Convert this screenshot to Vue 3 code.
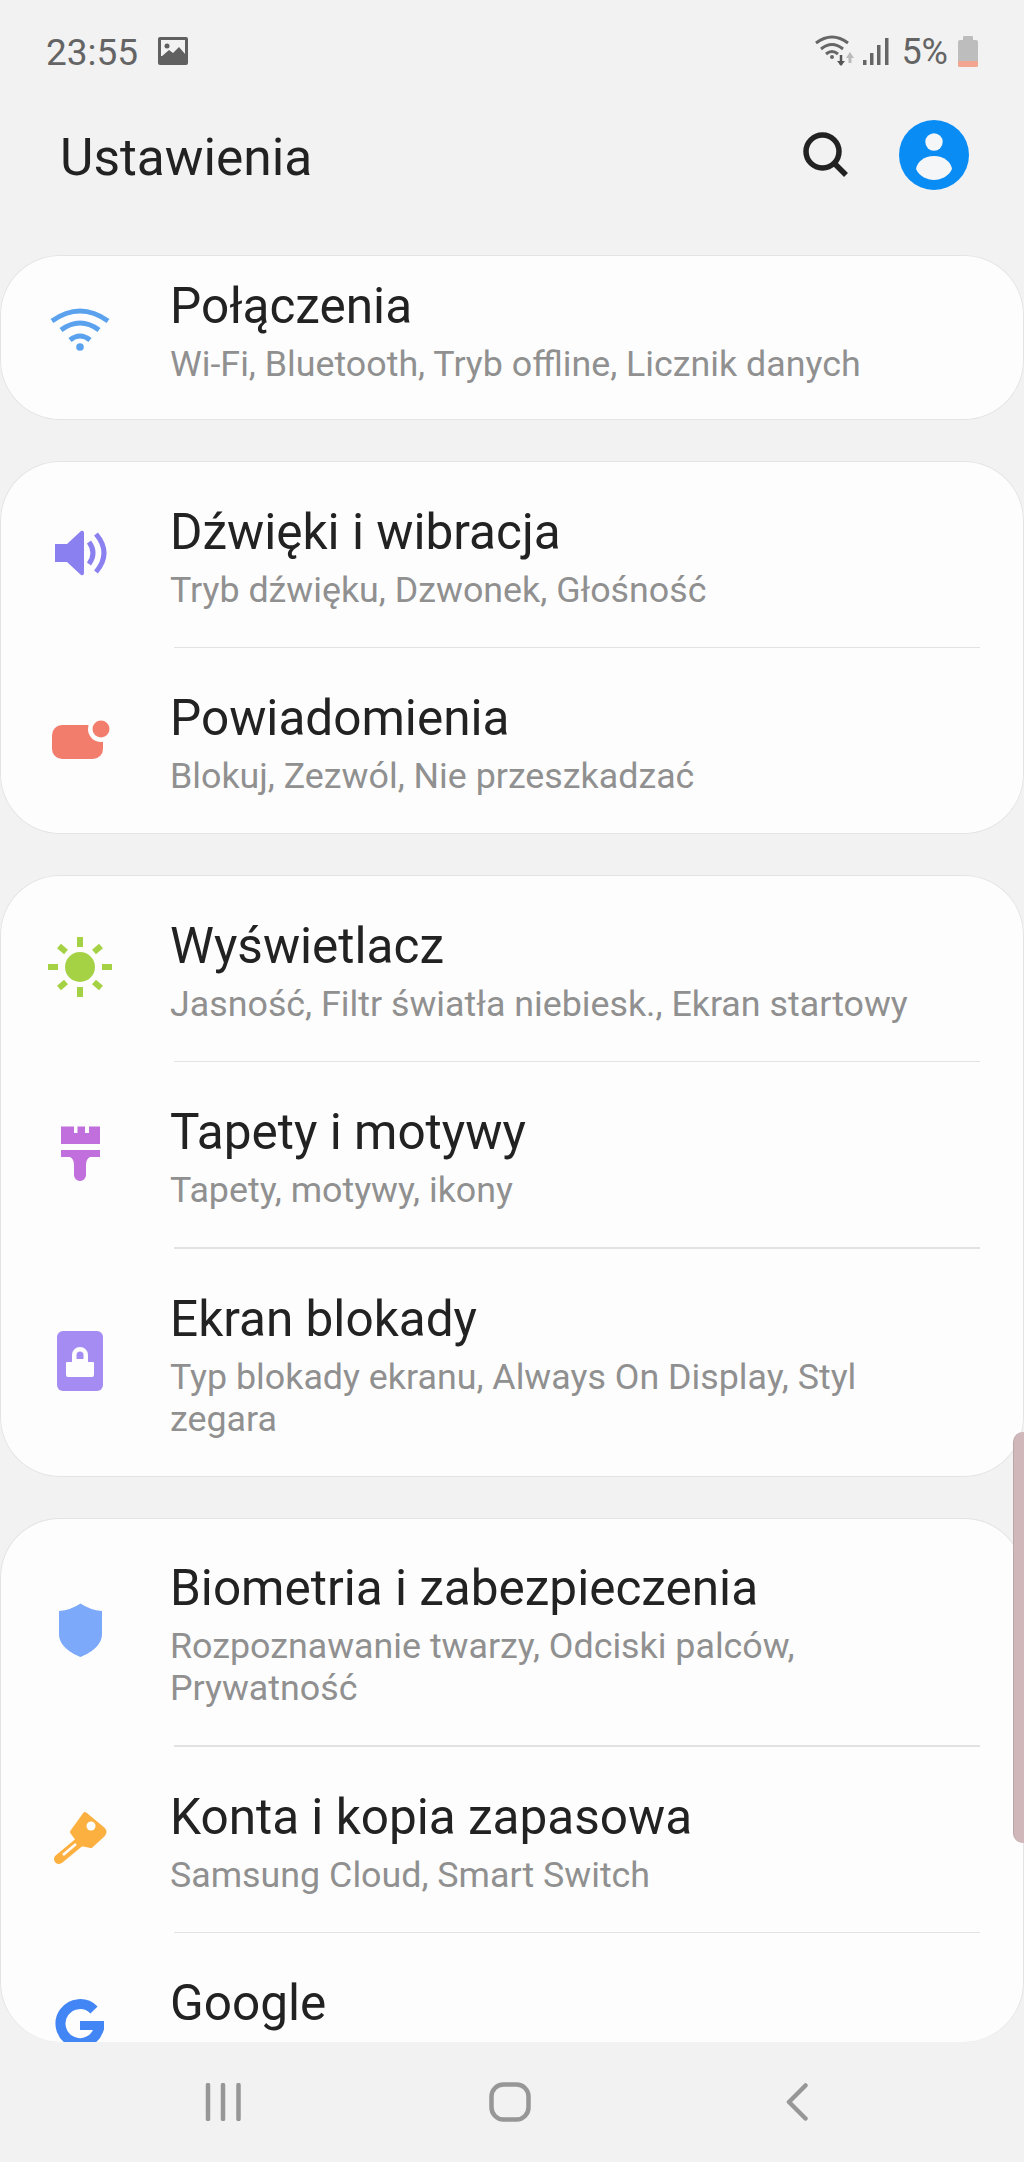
<script setup>
const groups = [
  [{ icon: 'wifi', title: 'Połączenia', sub: 'Wi-Fi, Bluetooth, Tryb offline, Licznik danych', first: true }],
  [
    { icon: 'sound', title: 'Dźwięki i wibracja', sub: 'Tryb dźwięku, Dzwonek, Głośność' },
    { icon: 'notif', title: 'Powiadomienia', sub: 'Blokuj, Zezwól, Nie przeszkadzać' },
  ],
  [
    { icon: 'sun', title: 'Wyświetlacz', sub: 'Jasność, Filtr światła niebiesk., Ekran startowy' },
    { icon: 'brush', title: 'Tapety i motywy', sub: 'Tapety, motywy, ikony' },
    { icon: 'lock', title: 'Ekran blokady', sub: 'Typ blokady ekranu, Always On Display, Styl zegara' },
  ],
  [
    { icon: 'shield', title: 'Biometria i zabezpieczenia', sub: 'Rozpoznawanie twarzy, Odciski palców, Prywatność' },
    { icon: 'key', title: 'Konta i kopia zapasowa', sub: 'Samsung Cloud, Smart Switch' },
    { icon: 'google', title: 'Google', sub: '' },
  ],
];
</script>

<template>
  <div class="phone">
    <div class="status">
      <span class="time">23:55</span>
      <svg class="pic" width="30" height="28" viewBox="0 0 30 28">
        <rect width="30" height="28" rx="2" fill="#606060" />
        <rect x="3" y="3" width="24" height="16" fill="#f2f2f2" />
        <circle cx="9" cy="9" r="2.5" fill="#606060" />
        <path d="M3 20 L11 13 L15 16 L21 10 L27 17 V22 H3Z" fill="#606060" />
      </svg>
      <svg class="radios" width="76" height="32" viewBox="0 0 76 32">
        <g fill="none" stroke="#666" stroke-width="3">
          <path d="M1 8 Q17 -4 33 8" />
          <path d="M6 14 Q17 5 28 14" />
          <path d="M11 19 Q17 14 23 19" />
        </g>
        <circle cx="17" cy="22" r="2" fill="#666" />
        <path d="M26 20 V30" stroke="#555" stroke-width="2.5" />
        <path d="M22 26 L26 31 L30 26Z" fill="#555" />
        <path d="M35 22 V28" stroke="#bbb" stroke-width="3" />
        <path d="M31 23 L35 17 L39 23Z" fill="#bbb" />
        <rect x="48" y="25" width="3.5" height="5" fill="#666" />
        <rect x="55" y="18" width="3.5" height="12" fill="#666" />
        <rect x="62" y="10" width="3.5" height="20" fill="#666" />
        <rect x="70" y="3" width="3.5" height="27" fill="#666" />
      </svg>
      <span class="pct">5%</span>
      <svg class="batt" width="20" height="31" viewBox="0 0 20 31">
        <rect x="5" width="10" height="6" rx="1" fill="#bdbdbd" />
        <rect y="4" width="20" height="27" rx="2" fill="#bdbdbd" />
        <path d="M0 25 H20 V29 a2 2 0 0 1 -2 2 H2 a2 2 0 0 1 -2 -2Z" fill="#f2a690" />
      </svg>
    </div>

    <div class="header">
      <h1>Ustawienia</h1>
      <svg class="search" width="46" height="46" viewBox="0 0 46 46">
        <circle cx="19.5" cy="19.5" r="16.5" fill="none" stroke="#222" stroke-width="5.5" />
        <path d="M31 31 L43 43" stroke="#222" stroke-width="5.5" />
      </svg>
      <svg class="avatar" width="70" height="70" viewBox="0 0 70 70">
        <circle cx="35" cy="35" r="35" fill="#0a8cf5" />
        <circle cx="35" cy="22" r="8.7" fill="#f4f6f8" />
        <path d="M35 36 C45 36 52 42 53 49 C50 56 42 60 35 60 C28 60 20 56 17 49 C18 42 25 36 35 36Z" fill="#f4f6f8" />
      </svg>
    </div>

    <div class="list">
      <section v-for="(group, g) in groups" :key="g" class="card">
        <div v-for="item in group" :key="item.title" class="row" :class="{ first: item.first }">
          <svg class="ico" width="64" height="64" viewBox="0 0 64 64">
            <g v-if="item.icon === 'wifi'" fill="none" stroke="#5aa2ee" stroke-width="5">
              <path d="M4 23 Q32 3 60 23" />
              <path d="M13 32 Q32 18 51 32" />
              <path d="M22 42 Q32 34 42 42" />
              <circle cx="32" cy="49" r="3.8" fill="#5aa2ee" stroke="none" />
            </g>
            <g v-else-if="item.icon === 'sound'" fill="#8a80ef">
              <path d="M7 23 H19 L33 10 Q36 9 36 12 V52 Q36 55 33 54 L19 41 H7Z" />
              <path d="M41 21 Q49 32 41 43" fill="none" stroke="#8a80ef" stroke-width="5" />
              <path d="M48 13 Q64 32 48 51" fill="none" stroke="#8a80ef" stroke-width="5" />
            </g>
            <g v-else-if="item.icon === 'notif'">
              <rect x="4" y="18" width="51" height="34" rx="10" fill="#f37d6c" />
              <circle cx="53" cy="22" r="13" fill="#fdfdfd" />
              <circle cx="53" cy="22" r="8.5" fill="#f37d6c" />
            </g>
            <g v-else-if="item.icon === 'sun'" stroke="#a5d145" stroke-width="6">
              <circle cx="32" cy="32" r="15" fill="#a5d145" stroke="none" />
              <path d="M32 2 V12 M32 52 V62 M0 32 H10 M54 32 H64 M11 11 L18 17 M53 11 L46 17 M11 53 L18 47 M53 53 L46 47" />
            </g>
            <g v-else-if="item.icon === 'brush'" fill="#c06fdc">
              <path d="M13 5.5 H26 V12 H29.5 V5.5 H37 V12 H41 V5.5 H52 V23 H13Z" />
              <path d="M13 29 H52 V36 H42 Q38 38 38 44 V54 A6 6 0 0 1 26 54 V44 Q26 38 22 36 H13Z" />
            </g>
            <g v-else-if="item.icon === 'lock'">
              <rect x="9" y="2" width="46" height="60" rx="6" fill="#a58cf2" />
              <path d="M24 33 V26 a8 8 0 0 1 16 0 V33 H45 a1 1 0 0 1 1 1 V46 a2 2 0 0 1 -2 2 H20 a2 2 0 0 1 -2 -2 V34 a1 1 0 0 1 1 -1Z" fill="#fdfdfd" />
              <path d="M28.5 30 V26 a3.5 3.5 0 0 1 7 0 V30Z" fill="#a58cf2" />
            </g>
            <path v-else-if="item.icon === 'shield'" d="M32.5 5.5 Q42 12 54 13 V36 C54 48 42 55 32.5 59 C23 55 11 48 11 36 V13 Q23 12 32.5 5.5Z" fill="#7da9fb" />
            <g v-else-if="item.icon === 'key'">
              <path d="M37 8 L55 23 Q58 26 55 29 L43 40 L33 38 L24 26Z" fill="#fbb040" stroke="#fbb040" stroke-width="4" stroke-linejoin="round" />
              <path d="M34 34 L11 53" stroke="#fbb040" stroke-width="10" stroke-linecap="round" />
              <path d="M15 49 L28 38" stroke="#fdfdfd" stroke-width="2.5" />
              <circle cx="43" cy="20" r="4.5" fill="#fdfdfd" />
            </g>
            <g v-else-if="item.icon === 'google'">
              <path d="M46 18 A19.5 19.5 0 1 0 51 36" fill="none" stroke="#4285f4" stroke-width="10" />
              <rect x="32" y="29" width="24" height="9" fill="#4285f4" />
            </g>
          </svg>
          <div class="texts">
            <div class="title">{{ item.title }}</div>
            <div class="sub">{{ item.sub }}</div>
          </div>
        </div>
      </section>
    </div>

    <div class="nav">
      <svg class="recents" width="36" height="38" viewBox="0 0 36 38">
        <path d="M3 2 V36 M18 2 V36 M33.500 2 V36" stroke="#979797" stroke-width="4.500" stroke-linecap="round" />
      </svg>
      <svg class="home" width="42" height="40" viewBox="0 0 42 40">
        <rect x="2.500" y="2.500" width="37" height="35" rx="12" fill="none" stroke="#979797" stroke-width="4.500" />
      </svg>
      <svg class="back" width="22" height="38" viewBox="0 0 22 38">
        <path d="M19.500 2.500 L3 19 L19.500 35.500" fill="none" stroke="#979797" stroke-width="4.500" stroke-linecap="round" stroke-linejoin="round" />
      </svg>
    </div>

    <div class="scrollbar"></div>
  </div>
</template>

<style scoped>
.phone {
  position: relative;
  width: 1024px;
  height: 2162px;
  overflow: hidden;
  display: flex;
  flex-direction: column;
  background: #f2f2f2;
  font-family: Roboto, "Liberation Sans", sans-serif;
}
.status {
  height: 102px;
  flex-shrink: 0;
  display: flex;
  align-items: center;
  padding: 2px 46px 0;
  box-sizing: border-box;
  color: #646464;
  font-size: 36px;
}
.time {
  font-size: 37px;
}
.pic {
  margin-left: 20px;
  margin-top: -2px;
}
.radios {
  margin-left: auto;
  margin-top: -2px;
}
.pct {
  margin-left: 10px;
}
.batt {
  margin-left: 10px;
  margin-top: -2px;
}
.header {
  height: 111px;
  flex-shrink: 0;
  box-sizing: border-box;
  margin-bottom: 42px;
  display: flex;
  align-items: center;
  padding: 0 55px 6px 60px;
}
h1 {
  margin: 0;
  padding-top: 6px;
  font-size: 51.500px;
  font-weight: 400;
  color: #222;
}
.search {
  margin-left: auto;
}
.avatar {
  margin-left: 50px;
}
.list {
  flex: 1;
  min-height: 0;
  display: flex;
  flex-direction: column;
  gap: 41px;
}
.card {
  flex-shrink: 0;
  background: #fdfdfd;
  box-shadow: inset 0 0 0 1px #e4e4e4;
  border-radius: 60px;
  overflow: hidden;
}
.card:last-child {
  flex: 1;
  min-height: 0;
  box-shadow: inset 0 1px 0 #e4e4e4, inset 1px 0 0 #e4e4e4, inset -1px 0 0 #e4e4e4;
}
.row {
  position: relative;
  display: flex;
  align-items: center;
  padding: 40.500px 90px 37px 48px;
}
.row.first {
  padding-top: 21px;
  padding-bottom: 35px;
}
.row + .row::before {
  content: "";
  position: absolute;
  top: -1px;
  left: 174px;
  right: 44px;
  height: 1.500px;
  background: #e2e2e2;
}
.ico {
  flex-shrink: 0;
  margin-bottom: 7px;
}
.first .ico {
  margin-bottom: 2px;
}
.texts {
  margin-left: 58px;
}
.title {
  font-size: 49.500px;
  line-height: 60px;
  color: #222;
}
.sub {
  margin-top: 7px;
  min-height: 42px;
  font-size: 35.800px;
  line-height: 42px;
  color: #909090;
}
.nav {
  height: 120px;
  flex-shrink: 0;
  display: flex;
  align-items: center;
  padding-left: 205px;
}
.home {
  margin-left: 248px;
}
.back {
  margin-left: 255px;
}
.scrollbar {
  position: absolute;
  top: 1432px;
  right: 0;
  width: 10px;
  height: 411px;
  background: #cfb7ba;
  border-left: 1px solid #bba5a8;
  border-radius: 10px 0 0 10px;
}
</style>
